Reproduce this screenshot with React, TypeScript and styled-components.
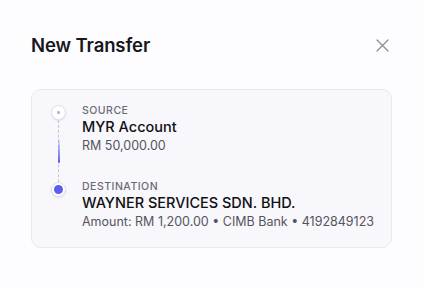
import React from "react";
import styled, { createGlobalStyle } from "styled-components";

const Global = createGlobalStyle`
  html, body { margin: 0; padding: 0; background: #fdfcff; }
  body { font-family: Inter, "Noto Sans", sans-serif; -webkit-font-smoothing: antialiased; }
`;

const Dialog = styled.div`
  width: 423px;
  height: 288px;
  box-sizing: border-box;
  padding: 32px 31px 0 31px;
  background: #fdfcff;
`;

const Header = styled.div`
  display: flex;
  align-items: center;
  justify-content: space-between;
  height: 26px;
`;

const Title = styled.h2`
  margin: 0;
  font-size: 18.5px;
  font-weight: 600;
  color: #18181b;
  letter-spacing: -0.1px;
`;

const Close = styled.button`
  border: 0;
  background: transparent;
  padding: 0;
  margin-right: 3px;
  width: 14px;
  height: 14px;
  display: flex;
  align-items: center;
  justify-content: center;
  color: #8c8c92;
`;

const Card = styled.div`
  margin-top: 31px;
  border: 1px solid #e9e8f2;
  border-radius: 10px;
  background: #f8f7fc;
  padding: 14px 8px 16px 19px;
  display: flex;
  flex-direction: column;
`;

const Step = styled.div<{ $last?: boolean }>`
  display: grid;
  grid-template-columns: 15px 1fr;
  column-gap: 16px;
  padding-bottom: ${(p) => (p.$last ? "0" : "25px")};
`;

const RailCol = styled.div<{ $offset: number; $extend?: boolean }>`
  display: flex;
  flex-direction: column;
  align-items: center;
  padding-top: ${(p) => p.$offset}px;
  margin-bottom: ${(p) => (p.$extend ? "-27px" : "0")};
`;

const Node = styled.div<{ $active?: boolean }>`
  box-sizing: border-box;
  width: 15px;
  height: 15px;
  border-radius: 50%;
  background: #ffffff;
  border: 1px solid #e0dfe8;
  box-shadow: 0 1px 2px rgba(40, 30, 90, 0.1);
  display: flex;
  align-items: center;
  justify-content: center;
  flex: none;
  &::after {
    content: "";
    width: ${(p) => (p.$active ? "9px" : "2.5px")};
    height: ${(p) => (p.$active ? "9px" : "2.5px")};
    border-radius: 50%;
    background: ${(p) => (p.$active ? "#5b5cf0" : "#b4aef2")};
  }
`;

const Connector = styled.div`
  flex: 1;
  width: 0;
  border-left: 1px dashed #c6c5d2;
  position: relative;
`;

const Flow = styled.div`
  position: absolute;
  left: -1.5px;
  top: 19px;
  width: 2px;
  height: 24px;
  border-radius: 1px;
  background: linear-gradient(to bottom, rgba(91, 92, 240, 0.1), #5b5cf0);
`;

const Body = styled.div`
  display: flex;
  flex-direction: column;
  min-width: 0;
`;

const Label = styled.div`
  font-size: 10.5px;
  font-weight: 500;
  color: #6b6b73;
  letter-spacing: 0.5px;
  line-height: 13px;
`;

const Name = styled.div`
  font-size: 14.5px;
  font-weight: 500;
  color: #111114;
  line-height: 20px;
`;

const Meta = styled.div`
  font-size: 12.5px;
  color: #55555d;
  line-height: 18px;
  white-space: nowrap;
`;

export default function App() {
  return (
    <>
      <Global />
      <Dialog>
        <Header>
          <Title>New Transfer</Title>
          <Close aria-label="Close">
            <svg width="13" height="13" viewBox="0 0 13 13" fill="none" stroke="currentColor" strokeWidth="1.3" strokeLinecap="round">
              <path d="M1 1 L12 12 M12 1 L1 12" />
            </svg>
          </Close>
        </Header>
        <Card>
          <Step>
            <RailCol $offset={1} $extend>
              <Node />
              <Connector>
                <Flow />
              </Connector>
            </RailCol>
            <Body>
              <Label>SOURCE</Label>
              <Name>MYR Account</Name>
              <Meta>RM 50,000.00</Meta>
            </Body>
          </Step>
          <Step $last>
            <RailCol $offset={2}>
              <Node $active />
            </RailCol>
            <Body>
              <Label>DESTINATION</Label>
              <Name>WAYNER SERVICES SDN. BHD.</Name>
              <Meta>Amount: RM 1,200.00 • CIMB Bank • 4192849123</Meta>
            </Body>
          </Step>
        </Card>
      </Dialog>
    </>
  );
}
